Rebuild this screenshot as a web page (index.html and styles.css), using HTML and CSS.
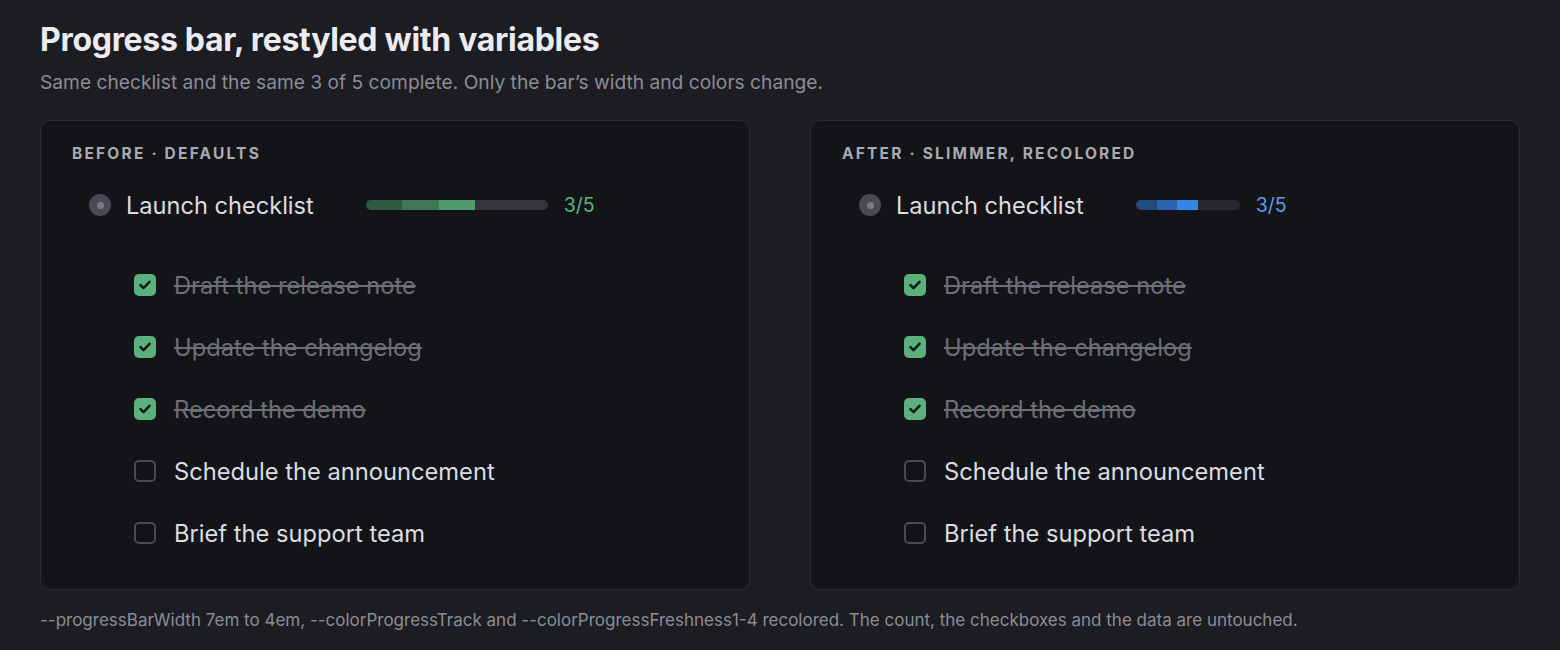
FILE: index.html
```html
<!DOCTYPE html>
<html>
  <head>
    <link rel="stylesheet" href="styles.css">
  </head>
  <body>
    <h1 class="title">Progress bar, restyled with variables</h1>
    <p class="subtitle">Same checklist and the same 3 of 5 complete. Only the bar’s width and colors change.</p>

    <div class="compare">
      <div class="card">
        <div class="card-label">Before · Defaults</div>
        <div class="list-head">
          <span class="radio"></span>
          <span class="list-name">Launch checklist</span>
          <div class="bar">
            <span class="seg seg1"></span>
            <span class="seg seg2"></span>
            <span class="seg seg3"></span>
          </div>
          <span class="count">3/5</span>
        </div>
        <ul class="items">
          <li class="item done"><span class="box"><svg viewBox="0 0 22 22"><path d="M6.5 11.2l3 3 6-6.4"/></svg></span>Draft the release note</li>
          <li class="item done"><span class="box"><svg viewBox="0 0 22 22"><path d="M6.5 11.2l3 3 6-6.4"/></svg></span>Update the changelog</li>
          <li class="item done"><span class="box"><svg viewBox="0 0 22 22"><path d="M6.5 11.2l3 3 6-6.4"/></svg></span>Record the demo</li>
          <li class="item"><span class="box"></span>Schedule the announcement</li>
          <li class="item"><span class="box"></span>Brief the support team</li>
        </ul>
      </div>

      <div class="card after">
        <div class="card-label">After · Slimmer, recolored</div>
        <div class="list-head">
          <span class="radio"></span>
          <span class="list-name">Launch checklist</span>
          <div class="bar">
            <span class="seg seg1"></span>
            <span class="seg seg2"></span>
            <span class="seg seg3"></span>
          </div>
          <span class="count">3/5</span>
        </div>
        <ul class="items">
          <li class="item done"><span class="box"><svg viewBox="0 0 22 22"><path d="M6.5 11.2l3 3 6-6.4"/></svg></span>Draft the release note</li>
          <li class="item done"><span class="box"><svg viewBox="0 0 22 22"><path d="M6.5 11.2l3 3 6-6.4"/></svg></span>Update the changelog</li>
          <li class="item done"><span class="box"><svg viewBox="0 0 22 22"><path d="M6.5 11.2l3 3 6-6.4"/></svg></span>Record the demo</li>
          <li class="item"><span class="box"></span>Schedule the announcement</li>
          <li class="item"><span class="box"></span>Brief the support team</li>
        </ul>
      </div>
    </div>

    <p class="note">--progressBarWidth 7em to 4em, --colorProgressTrack and --colorProgressFreshness1-4 recolored. The count, the checkboxes and the data are untouched.</p>
  </body>
</html>
```

FILE: styles.css
```css
body {
  margin: 0;
  padding: 21px 40px 0 40px;
  background-color: #1c1d22;
  font-family: Inter, "Noto Sans", sans-serif;
  color: #e6e6ea;
}
.title {
  margin: 0;
  font-size: 32px;
  font-weight: 700;
  line-height: 38px;
  letter-spacing: -0.3px;
  color: #ececf0;
}
.subtitle {
  margin: 9px 0 0 0;
  font-size: 19.2px;
  line-height: 28px;
  color: #8b8c97;
}
.compare {
  display: flex;
  gap: 60px;
  margin-top: 24px;
}
.card {
  --barWidth: 7em;
  --track: #34353f;
  --fresh1: #2f5a42;
  --fresh2: #3e7855;
  --fresh3: #4f9a6c;
  --countColor: #5fb47f;
  flex: 1;
  height: 470px;
  box-sizing: border-box;
  background-color: #131418;
  border: 1px solid #2b2c32;
  border-radius: 10px;
  padding: 24px 31px 0 31px;
}
.card.after {
  --barWidth: 4em;
  --track: #262730;
  --fresh1: #24497d;
  --fresh2: #2a64ae;
  --fresh3: #3385e0;
  --countColor: #5c9de8;
}
.card-label {
  font-size: 15.5px;
  font-weight: 700;
  letter-spacing: 2.2px;
  text-transform: uppercase;
  color: #a9aab4;
  line-height: 18px;
}
.list-head {
  display: flex;
  align-items: center;
  margin-top: 22px;
  padding-left: 17px;
  height: 40px;
  font-size: 26px;
}
.radio {
  width: 22px;
  height: 22px;
  border-radius: 50%;
  background-color: #494a55;
  display: flex;
  align-items: center;
  justify-content: center;
  flex-shrink: 0;
}
.radio::after {
  content: "";
  width: 7px;
  height: 7px;
  border-radius: 50%;
  background-color: #7a7b85;
}
.list-name {
  margin-left: 15px;
  font-size: 23.6px;
  color: #dcdce2;
}
.bar {
  display: flex;
  width: var(--barWidth);
  height: 10px;
  margin-left: 52px;
  border-radius: 5px;
  overflow: hidden;
  background-color: var(--track);
}
.seg {
  width: 20%;
  height: 100%;
}
.seg1 { background-color: var(--fresh1); }
.seg2 { background-color: var(--fresh2); }
.seg3 { background-color: var(--fresh3); }
.count {
  margin-left: 16px;
  font-size: 19.5px;
  color: var(--countColor);
}
.items {
  list-style: none;
  margin: 29px 0 0 0;
  padding: 0 0 0 62px;
}
.item {
  display: flex;
  align-items: center;
  height: 62px;
  font-size: 23.7px;
  color: #dcdce2;
}
.item.done {
  color: #6d6e78;
  text-decoration: line-through;
  text-decoration-thickness: 2px;
}
.box {
  width: 22px;
  height: 22px;
  box-sizing: border-box;
  border: 2px solid #494a52;
  border-radius: 5px;
  margin-right: 18px;
  flex-shrink: 0;
}
.item.done .box {
  border: none;
  background-color: #5cb07b;
}
.box svg {
  display: block;
  width: 22px;
  height: 22px;
  fill: none;
  stroke: #0f1f17;
  stroke-width: 2.6;
  stroke-linecap: round;
  stroke-linejoin: round;
}
.note {
  margin: 18px 0 0 0;
  font-size: 17px;
  line-height: 24px;
  color: #8b8c97;
}
```
